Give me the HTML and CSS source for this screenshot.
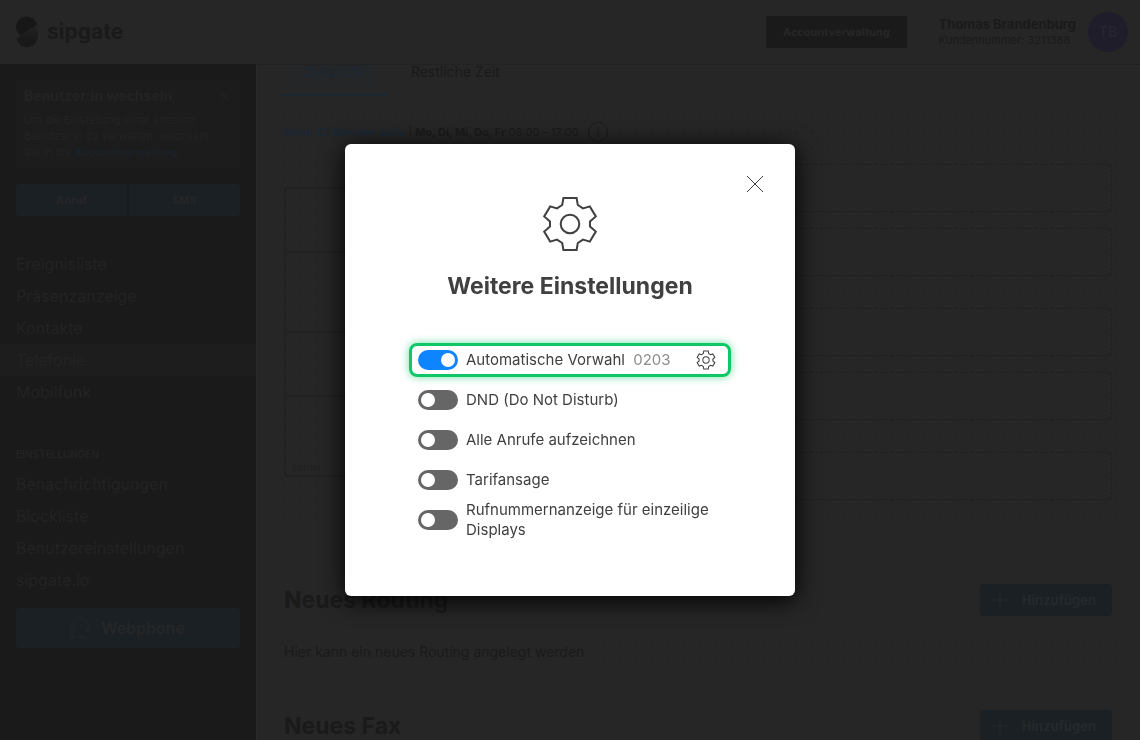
FILE: index.html
```html
<!DOCTYPE html>
<html lang="de">
<head>
  <meta charset="UTF-8">
  <meta name="viewport" content="width=device-width, initial-scale=1.0">
  <title>sipgate</title>
  <link rel="stylesheet" href="styles.css">
</head>
<body>

<svg class="sprite" aria-hidden="true">
  <symbol id="gear" viewBox="0 0 64 64">
    <path d="M25.4 6H38.6L39.8 13L45 16.4L51.8 14.4L57.8 24.4L52 29.4V34.6L57.8 39.6L51.8 49.6L45 47.6L39.8 51L38.6 58H25.4L24.2 51L19 47.6L12.2 49.6L6.2 39.6L12 34.6V29.4L6.2 24.4L12.2 14.4L19 16.4L24.2 13Z"/>
    <circle cx="32" cy="32" r="9.3"/>
  </symbol>
  <symbol id="cross" viewBox="0 0 16 16">
    <path d="M0 0L16 16M16 0L0 16"/>
  </symbol>
  <symbol id="plus" viewBox="0 0 16 16">
    <path d="M8 0V16M0 8H16"/>
  </symbol>
</svg>

<header class="header">
  <a class="logo" href="#">
    <svg class="logo-mark" viewBox="0 0 22 32" aria-hidden="true">
      <defs>
        <linearGradient id="fade" x1="0" y1="0" x2="0" y2="1">
          <stop offset="0" stop-color="#232323"/>
          <stop offset="0.6" stop-color="#191919"/>
        </linearGradient>
      </defs>
      <path fill="url(#fade)" d="M0.3 22.8L20 10C21.6 13 21.8 17 21.8 21A10.9 10.9 0 0 1 0.3 22.8Z"/>
      <path fill="#171717" d="M5.5 19.6C1.8 17.4 0 14.5 0 10.8A10.7 10.7 0 0 1 21 8.2C18 11.5 10 14.5 5.5 19.6Z"/>
    </svg>
    <span>sipgate</span>
  </a>
  <button class="account-btn">Accountverwaltung</button>
  <div class="user">
    <strong>Thomas Brandenburg</strong>
    <span>Kundennummer: 3211388</span>
  </div>
  <div class="avatar">TB</div>
</header>

<div class="page">
  <aside class="sidebar">
    <div class="notice">
      <div class="notice-head">
        <h2>Benutzer:in wechseln</h2>
        <button class="notice-close" aria-label="Hinweis schließen"><svg><use href="#cross"/></svg></button>
      </div>
      <p>Um die Einstellung einer anderen<br>Benutzer:in zu verwalten, wechseln<br>Sie in die <a href="#">Accountverwaltung.</a></p>
    </div>
    <div class="quick-actions">
      <button>Anruf</button>
      <button>SMS</button>
    </div>
    <nav class="nav">
      <a href="#">Ereignisliste</a>
      <a href="#">Präsenzanzeige</a>
      <a href="#">Kontakte</a>
      <a href="#" class="active">Telefonie</a>
      <a href="#">Mobilfunk</a>
    </nav>
    <nav class="nav">
      <h2>EINSTELLUNGEN</h2>
      <a href="#">Benachrichtigungen</a>
      <a href="#">Blockliste</a>
      <a href="#">Benutzereinstellungen</a>
      <a href="#">sipgate.io</a>
    </nav>
    <button class="webphone">
      <svg viewBox="0 0 20 22" aria-hidden="true">
        <path d="M2 10V9a8 8 0 0 1 16 0v1M1 10h2a1 1 0 0 1 1 1v3a1 1 0 0 1-1 1H1zM19 10h-2a1 1 0 0 0-1 1v3a1 1 0 0 0 1 1h2zM1 15v5h9M10 19h3v2h-3z"/>
      </svg>
      Webphone
    </button>
  </aside>

  <main class="main">
    <div class="tabs">
      <button class="tab tab-active"><span>Zeitprofil</span></button>
      <button class="tab"><span>Restliche Zeit</span></button>
    </div>

    <section class="dots routing">
      <p class="status">
        <span><b class="status-active">Noch 42 Minuten aktiv</b> | <b>Mo, Di, Mi, Do, Fr</b> 08:00 – 17:00</span>
        <svg viewBox="0 0 20 20" aria-hidden="true"><circle cx="10" cy="10" r="9.5"/><path d="M10 8V15M10 5V7"/></svg>
      </p>
      <div class="diagram">
        <div class="steps">
          <div class="step"></div>
          <div class="step step-tall"></div>
          <div class="step"></div>
          <div class="step step-tall">Immer</div>
        </div>
        <div class="targets">
          <div class="group"><div class="target"></div><div class="target"></div></div>
          <div class="group"><div class="target"></div><div class="target"></div></div>
          <div class="group"><div class="target"></div></div>
        </div>
      </div>
    </section>

    <div class="section-head">
      <h2>Neues Routing</h2>
      <button class="add-btn"><svg><use href="#plus"/></svg>Hinzufügen</button>
    </div>
    <div class="dots hint"><p>Hier kann ein neues Routing angelegt werden</p></div>

    <div class="section-head">
      <h2>Neues Fax</h2>
      <button class="add-btn"><svg><use href="#plus"/></svg>Hinzufügen</button>
    </div>
  </main>
</div>

<div class="backdrop">
  <div class="modal" role="dialog" aria-modal="true" aria-labelledby="modal-title">
    <button class="modal-close" aria-label="Schließen"><svg><use href="#cross"/></svg></button>
    <svg class="modal-icon" aria-hidden="true"><use href="#gear"/></svg>
    <h1 id="modal-title">Weitere Einstellungen</h1>
    <ul class="settings">
      <li class="highlight">
        <input type="checkbox" class="toggle" id="prefix" checked>
        <label for="prefix">Automatische Vorwahl <span>0203</span></label>
        <button class="edit" aria-label="Vorwahl bearbeiten"><svg><use href="#gear"/></svg></button>
      </li>
      <li>
        <input type="checkbox" class="toggle" id="dnd">
        <label for="dnd">DND (Do Not Disturb)</label>
      </li>
      <li>
        <input type="checkbox" class="toggle" id="record">
        <label for="record">Alle Anrufe aufzeichnen</label>
      </li>
      <li>
        <input type="checkbox" class="toggle" id="tariff">
        <label for="tariff">Tarifansage</label>
      </li>
      <li>
        <input type="checkbox" class="toggle" id="display">
        <label for="display">Rufnummernanzeige für einzeilige Displays</label>
      </li>
    </ul>
  </div>
</div>

</body>
</html>
```
FILE: styles.css
```css
* {
  box-sizing: border-box;
}

body {
  margin: 0;
  height: 100vh;
  display: flex;
  flex-direction: column;
  overflow: hidden;
  background: #262626;
  color: #1a1a1a;
  font-family: Inter, "Liberation Sans", sans-serif;
  font-size: 14px;
  line-height: 16px;
}

h1,
h2,
p,
ul {
  margin: 0;
  padding: 0;
}

a {
  color: inherit;
  text-decoration: none;
}

button {
  margin: 0;
  padding: 0;
  border: none;
  background: none;
  color: inherit;
  font: inherit;
  cursor: pointer;
}

svg {
  fill: none;
  stroke: currentColor;
}

.sprite {
  display: none;
}

/* header */

.header {
  display: flex;
  align-items: center;
  flex: none;
  height: 64px;
  padding: 0 12px 0 16px;
}

.logo {
  display: flex;
  align-items: center;
  gap: 9px;
  margin-right: auto;
  font-size: 21px;
  font-weight: 700;
}

.logo-mark {
  width: 22px;
  height: 32px;
  stroke: none;
}

.account-btn {
  height: 32px;
  padding: 0 17px;
  margin-right: 32px;
  border-radius: 2px;
  background: #1a1a1a;
  color: #272727;
  font-size: 11px;
  font-weight: 700;
}

.user {
  display: flex;
  flex-direction: column;
  margin-right: 12px;
  font-size: 13px;
}

.user span {
  font-size: 11px;
}

.avatar {
  width: 40px;
  border-radius: 50%;
  background: #1f1d2a;
  color: #262531;
  font-weight: 600;
  line-height: 40px;
  text-align: center;
}

.page {
  display: flex;
  flex: 1;
  min-height: 0;
}

/* sidebar */

.sidebar {
  display: flex;
  flex-direction: column;
  flex: none;
  width: 256px;
  padding: 16px;
  background: #1a1a1a;
  color: #232323;
}

.notice {
  padding: 8px;
  border-radius: 4px;
  background: #1c1c1c;
  font-size: 11px;
}

.notice-head {
  display: flex;
  align-items: center;
  justify-content: space-between;
  margin-bottom: 8px;
}

.notice-head h2 {
  font-size: 14px;
}

.notice-close {
  width: 16px;
  height: 16px;
}

.notice-close svg {
  display: block;
  width: 9px;
  height: 9px;
  margin: auto;
  stroke-width: 2;
}

.notice a {
  color: #1b222b;
  font-weight: 500;
}

.quick-actions {
  display: flex;
  gap: 2px;
  margin-top: 16px;
  border-radius: 4px;
  overflow: hidden;
}

.quick-actions button {
  flex: 1;
  height: 32px;
  background: #1b2024;
  color: #252628;
  font-size: 11px;
  font-weight: 700;
}

.nav {
  margin: 32px -16px 0;
  font-size: 16px;
  line-height: 32px;
}

.nav a {
  display: block;
  padding: 0 16px;
}

.nav h2 {
  padding: 0 16px;
  font-size: 10px;
  font-weight: 600;
  line-height: 28px;
}

.nav .active {
  background: #1d1d1d;
}

.webphone {
  display: flex;
  align-items: center;
  justify-content: center;
  gap: 10px;
  flex: none;
  height: 40px;
  margin-top: 12px;
  border-radius: 4px;
  background: #1b2024;
  color: #252628;
  font-size: 16px;
  font-weight: 600;
}

.webphone svg {
  width: 20px;
  height: 22px;
}

/* content */

.main {
  flex: 1;
  min-width: 0;
  border-top: 1px solid #222;
  border-left: 1px solid #292929;
  overflow: hidden;
}

.tabs {
  display: flex;
  height: 31px;
  margin: 0 16px 12px 23px;
  border-bottom: 1px solid #252525;
}

.tab {
  display: flex;
  height: 31px;
  padding: 0 8px;
}

.tab span {
  height: 22px;
  padding: 0 16px;
  line-height: 14px;
}

.tab-active {
  border-bottom: 2px solid #1c2631;
  color: #1b2733;
}

.tab-active span {
  background: #252628;
}

.dots {
  margin: 0 16px 0 19px;
  padding: 0 12px 0 8px;
  background: radial-gradient(circle, #222 1px, transparent 1px) 0 0 / 16px 16px;
}

.routing {
  padding-top: 12px;
  padding-bottom: 24px;
}

.status {
  display: flex;
  align-items: center;
  gap: 10px;
  width: fit-content;
  height: 24px;
  margin-bottom: 20px;
  background: #262626;
  font-size: 11px;
}

.status-active {
  color: #1b2733;
}

.status svg {
  width: 20px;
  height: 20px;
}

.diagram {
  display: grid;
  grid-template-columns: 1fr 2fr;
  gap: 32px;
  align-items: start;
}

.steps {
  margin-top: 23px;
  border: 2px solid #212121;
  border-top: none;
  border-radius: 4px;
}

.step {
  display: flex;
  align-items: flex-end;
  height: 64px;
  padding: 0 6px;
  border-top: 2px solid #212121;
  border-radius: 4px 4px 0 0;
  color: #1f1f1f;
  font-size: 10px;
}

.step-tall {
  height: 80px;
}

.targets {
  display: flex;
  flex-direction: column;
  gap: 32px;
}

.group {
  display: flex;
  flex-direction: column;
  gap: 16px;
}

.target {
  height: 48px;
  border: 1px dashed #1f1f1f;
  border-radius: 4px;
  background: #262626;
}

.section-head {
  display: flex;
  align-items: center;
  justify-content: space-between;
  margin: 60px 28px 20px 27px;
}

.section-head h2 {
  font-size: 23px;
  line-height: 32px;
}

.add-btn {
  display: flex;
  align-items: center;
  gap: 14px;
  height: 32px;
  padding: 0 16px 0 12px;
  border-radius: 4px;
  background: #1b2024;
  color: #25292c;
  font-size: 13px;
  font-weight: 700;
}

.add-btn svg {
  width: 16px;
  height: 16px;
}

.hint p {
  width: fit-content;
  padding-right: 8px;
  background: #262626;
  line-height: 32px;
}

.hint + .section-head {
  margin-top: 42px;
}

/* modal */

.backdrop {
  position: fixed;
  inset: 0;
  display: flex;
  align-items: center;
  justify-content: center;
}

.modal {
  position: relative;
  display: flex;
  flex-direction: column;
  align-items: center;
  width: 450px;
  padding: 48px 64px 56px;
  border-radius: 6px;
  background: #fff;
  color: #404040;
  box-shadow: 0 4px 24px #000;
}

.modal-close {
  position: absolute;
  top: 24px;
  right: 24px;
  width: 32px;
  height: 32px;
}

.modal-close svg {
  display: block;
  width: 16px;
  height: 16px;
  margin: auto;
}

.modal-icon {
  width: 64px;
  height: 64px;
  stroke-width: 2;
}

.modal h1 {
  margin: 14px 0 38px;
  font-size: 23px;
  font-weight: 700;
  line-height: 32px;
}

.settings {
  width: 100%;
  list-style: none;
  font-size: 15px;
  line-height: 20px;
}

.settings li {
  display: flex;
  align-items: center;
  gap: 8px;
  min-height: 40px;
  padding: 0 9px;
}

.settings .highlight {
  min-height: 34px;
  margin: 3px 0;
  padding: 0 6px;
  border: 3px solid #10c767;
  border-radius: 8px;
  box-shadow: 0 0 8px #10c76799;
}

.settings label {
  flex: 1;
}

.settings label span {
  margin-left: 4px;
  color: #8c8c8c;
}

.toggle {
  flex: none;
  width: 40px;
  height: 20px;
  margin: 0;
  padding: 3px;
  border-radius: 10px;
  background: #666;
  appearance: none;
  cursor: pointer;
}

.toggle::before {
  content: "";
  display: block;
  width: 14px;
  height: 14px;
  border-radius: 50%;
  background: #fff;
}

.toggle:checked {
  background: #0f84ff;
}

.toggle:checked::before {
  margin-left: auto;
}

.edit {
  width: 32px;
  height: 24px;
}

.edit svg {
  display: block;
  width: 22px;
  height: 22px;
  margin: auto;
  stroke-width: 3;
}
```
